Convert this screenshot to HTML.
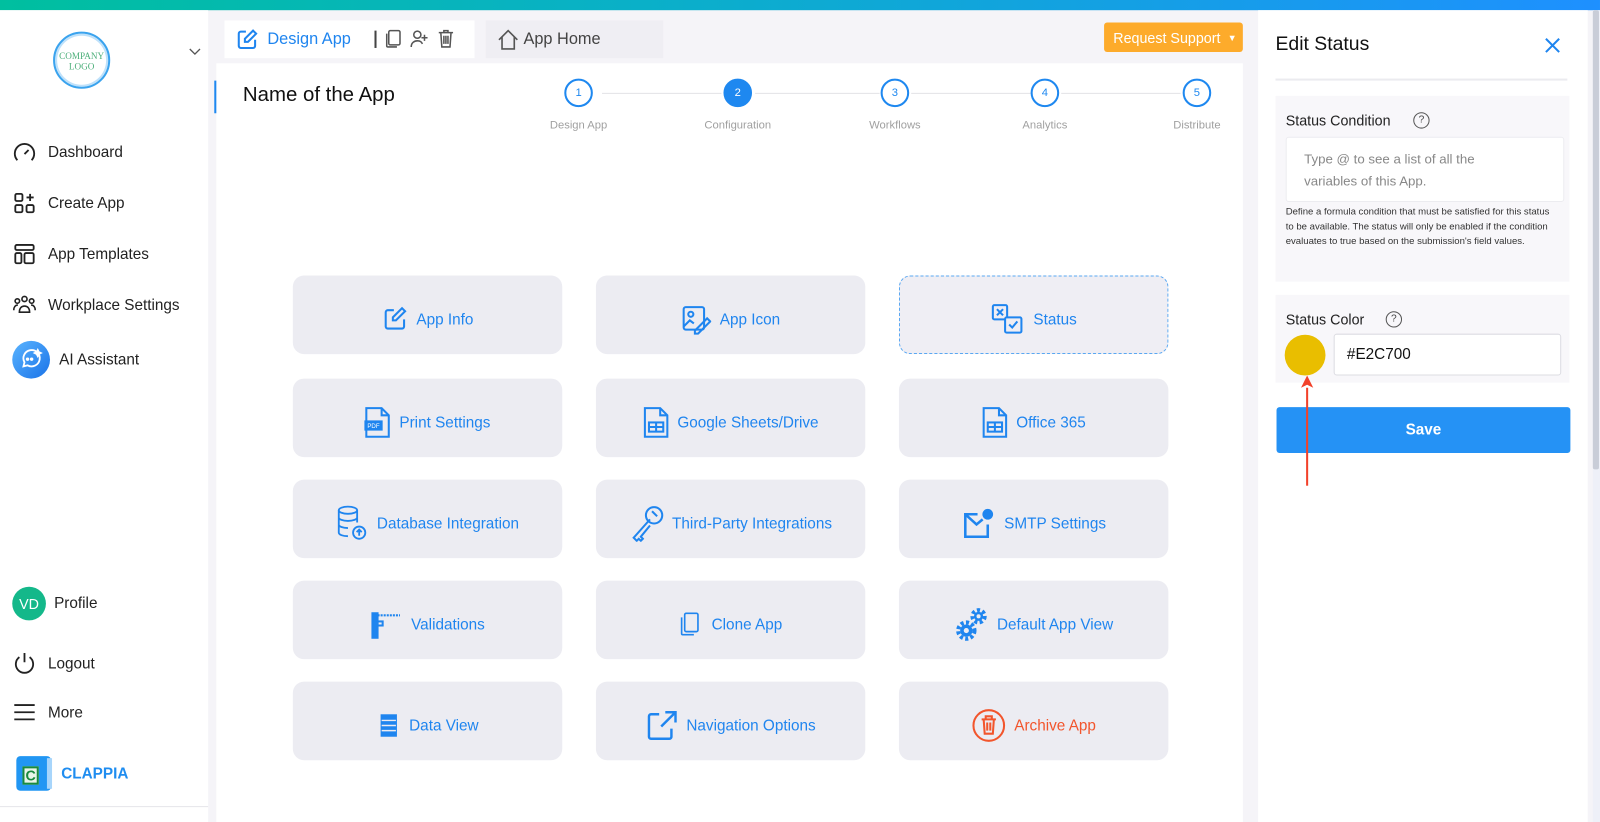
<!DOCTYPE html>
<html><head><meta charset="utf-8"><style>
*{box-sizing:border-box;margin:0;padding:0}
html,body{width:1600px;height:822px;overflow:hidden;background:#f5f4f8;font-family:"Liberation Sans",sans-serif}
#w{position:absolute;left:0;top:0;width:1568px;height:806px;transform:scale(1.0204);transform-origin:0 0}
.a{position:absolute}
.top{left:0;top:0;width:1568px;height:10px;background:linear-gradient(90deg,#00bf9f,#0ab0c8 40%,#1e90ff)}
.side{left:0;top:10px;width:204px;height:796px;background:#fff}
.nav{position:absolute;left:12px;display:flex;align-items:center;font-size:15px;color:#222}
.nav svg{margin-right:11px}
.card{position:absolute;width:264px;height:77px;background:#ececf2;border-radius:11px;display:flex;align-items:center;justify-content:center;color:#1f85ef;font-size:15px;padding-top:9px}
.card svg{margin-right:8px}
.step{position:absolute;width:28px;height:28px;border:2px solid #1e88f0;border-radius:50%;color:#1e88f0;font-size:11px;display:flex;align-items:center;justify-content:center;background:#fff}
.sl{position:absolute;font-size:11px;color:#a0a0a0;width:120px;text-align:center}
.ln{position:absolute;height:1px;background:#e2e2e6;top:91px}
</style></head><body><div id="w">
<div class="a top"></div>
<div class="a side">
 <div class="a" style="left:52px;top:21px;width:56px;height:56px;border-radius:50%;border:2px solid #3aa3ee;box-shadow:inset 0 0 0 2px #bfe1fa;font-family:'Liberation Serif',serif;font-size:9px;color:#4caf7a;text-align:center;line-height:10px;padding-top:17px">COMPANY<br>LOGO</div>
 <svg class="a" style="left:185px;top:37px" width="12" height="8" viewBox="0 0 12 8" fill="none" stroke="#555" stroke-width="1.3"><path d="M1 1l5 5 5-5"/></svg>
 <div class="nav" style="top:128px"><svg width="24" height="22" viewBox="0 0 24 22" fill="none" stroke="#222" stroke-width="1.8"><path d="M5 19A9.5 9.5 0 1 1 19 19"/><path d="M12 13l4-4"/></svg>Dashboard</div>
 <div class="nav" style="top:178px"><svg width="24" height="22" viewBox="0 0 24 22" fill="none" stroke="#222" stroke-width="1.8"><rect x="3" y="2" width="7" height="7" rx="1.5"/><rect x="3" y="13" width="7" height="7" rx="1.5"/><rect x="14" y="13" width="7" height="7" rx="1.5"/><path d="M17.5 2v7M14 5.5h7"/></svg>Create App</div>
 <div class="nav" style="top:228px"><svg width="24" height="22" viewBox="0 0 24 22" fill="none" stroke="#222" stroke-width="1.8"><rect x="3" y="2" width="18" height="5" rx="1.5"/><rect x="3" y="10" width="6" height="10" rx="1.5"/><rect x="12" y="10" width="9" height="10" rx="1.5"/></svg>App Templates</div>
 <div class="nav" style="top:278px"><svg width="24" height="22" viewBox="0 0 24 22" fill="none" stroke="#222" stroke-width="1.6"><circle cx="12" cy="5" r="2.5"/><circle cx="5" cy="7" r="2.2"/><circle cx="19" cy="7" r="2.2"/><path d="M7 18c0-4 2-6 5-6s5 2 5 6zM1.5 16c0-3 1.5-5 4-5M22.5 16c0-3-1.5-5-4-5"/></svg>Workplace Settings</div>
 <div class="nav" style="top:324px"><div style="width:37px;height:37px;border-radius:50%;background:linear-gradient(135deg,#5ab4ff,#1a73e8);margin-right:9px;position:relative"><svg width="37" height="37" viewBox="0 0 37 37" fill="none" stroke="#fff" stroke-width="1.8"><path d="M11 25l1-4a8 8 0 1 1 3 3z"/><circle cx="15" cy="18" r="0.8" fill="#fff"/><circle cx="19" cy="18" r="0.8" fill="#fff"/><path d="M25 9l1 2 2 1-2 1-1 2-1-2-2-1 2-1z" fill="#fff"/></svg></div>AI Assistant</div>
 <div class="nav" style="top:565px"><div style="width:33px;height:33px;border-radius:50%;background:#14b88a;color:#fff;font-size:14px;display:flex;align-items:center;justify-content:center;margin-right:8px">VD</div>Profile</div>
 <div class="nav" style="top:628px"><svg width="24" height="24" viewBox="0 0 24 24" fill="none" stroke="#222" stroke-width="1.8"><path d="M7 6a8.5 8.5 0 1 0 10 0M12 2v9"/></svg>Logout</div>
 <div class="nav" style="top:677px"><svg width="24" height="22" viewBox="0 0 24 22" fill="none" stroke="#222" stroke-width="1.8"><path d="M2 4h20M2 11h20M2 18h20"/></svg>More</div>
 <div class="a" style="left:16px;top:731px;width:34px;height:34px;border-radius:4px;background:#2196f3"><div style="position:absolute;left:6px;top:10px;width:16px;height:18px;background:#e8f5e9;border:2px solid #1a8a3e;color:#1a8a3e;font-weight:bold;font-size:14px;line-height:14px;text-align:center">C</div><div style="position:absolute;right:-1px;top:2px;width:5px;height:30px;background:#a7d5fb"></div></div>
 <div class="a" style="left:60px;top:740px;color:#1f8df0;font-weight:bold;font-size:15px">CLAPPIA</div>
 <div class="a" style="left:0;top:780px;width:204px;height:1px;background:#e6e6ea"></div>
</div>
<div class="a" style="left:220px;top:20px;width:245px;height:37px;background:#fff"></div>
<div class="a" style="left:231px;top:28px;display:flex;align-items:center;color:#1f85ef;font-size:16px"><svg width="22" height="22" viewBox="0 0 22 22" fill="none" stroke="#1f85ef" stroke-width="2"><path d="M10 3H5a2 2 0 0 0-2 2v12a2 2 0 0 0 2 2h12a2 2 0 0 0 2-2v-6"/><path d="M17 2l3 3-8 8H9v-3z"/></svg><span style="margin-left:9px">Design App</span></div>
<div class="a" style="left:367px;top:28px;display:flex;align-items:center;gap:6px;color:#555"><div style="width:2px;height:17px;background:#444"></div><svg width="20" height="20" viewBox="0 0 20 20" fill="none" stroke="#555" stroke-width="1.5"><rect x="6" y="2" width="11" height="14" rx="1.5"/><path d="M4 5v12a1 1 0 0 0 1 1h9"/></svg><svg width="20" height="20" viewBox="0 0 20 20" fill="none" stroke="#555" stroke-width="1.5"><circle cx="8" cy="6" r="3.5"/><path d="M2 18c0-4 3-6 6-6s4 1 5 3M15 6v6M12 9h6"/></svg><svg width="20" height="20" viewBox="0 0 20 20" fill="none" stroke="#555" stroke-width="1.5"><path d="M3 4h14M8 4V2h4v2M5 4l1 14h8l1-14M8 7v8M10 7v8M12 7v8"/></svg></div>
<div class="a" style="left:476px;top:20px;width:174px;height:37px;background:#efeef3;display:flex;align-items:center;padding-left:11px;color:#444;font-size:16px"><svg width="22" height="22" viewBox="0 0 22 22" fill="none" stroke="#555" stroke-width="1.6"><path d="M2 11L11 2l9 9M5 8v12h12V8"/></svg><span style="margin-left:4px">App Home</span></div>
<div class="a" style="left:1082px;top:22px;width:136px;height:29px;background:#fdab2b;border-radius:3px;color:#fff;font-size:14px;display:flex;align-items:center;padding-left:9px">Request Support <span style="font-size:9px;margin-left:7px">&#9660;</span></div>
<div class="a" style="left:212px;top:62px;width:1006px;height:744px;background:#fff"></div>
<div class="a" style="left:210px;top:79px;width:2px;height:32px;background:#1e88f0"></div>
<div class="a" style="left:238px;top:82px;font-size:20px;color:#111">Name of the App</div>
<div class="ln" style="left:590px;width:117px"></div><div class="ln" style="left:740px;width:122px"></div><div class="ln" style="left:893px;width:117px"></div><div class="ln" style="left:1040px;width:117px"></div>
<div class="step" style="left:553px;top:77px">1</div>
<div class="step" style="left:709px;top:77px;background:#1e88f0;color:#fff">2</div>
<div class="step" style="left:863px;top:77px">3</div>
<div class="step" style="left:1010px;top:77px">4</div>
<div class="step" style="left:1159px;top:77px">5</div>
<div class="sl" style="left:507px;top:117px">Design App</div>
<div class="sl" style="left:663px;top:117px">Configuration</div>
<div class="sl" style="left:817px;top:117px">Workflows</div>
<div class="sl" style="left:964px;top:117px">Analytics</div>
<div class="sl" style="left:1113px;top:117px">Distribute</div>
<div class="card" style="left:287px;top:270px"><svg width="26" height="26" viewBox="0 0 26 26" fill="none" stroke="#1f85ef" stroke-width="2"><path d="M12 4H6a2 2 0 0 0-2 2v14a2 2 0 0 0 2 2h14a2 2 0 0 0 2-2v-7"/><path d="M20 2l3 3-9 9h-3v-3z"/></svg>App Info</div>
<div class="card" style="left:584px;top:270px"><svg width="30" height="30" viewBox="0 0 30 30" fill="none" stroke="#1f85ef" stroke-width="2"><rect x="3" y="3" width="20" height="22" rx="2"/><circle cx="10" cy="10" r="2.5"/><path d="M3 22l6-6 4 3M14 26l12-12 3 3-12 12h-3z"/></svg>App Icon</div>
<div class="card" style="left:881px;top:270px;border:1.5px dashed #5aa8f2;background:#efeef4"><svg width="34" height="32" viewBox="0 0 34 32" fill="none" stroke="#1f85ef" stroke-width="2"><rect x="2" y="2" width="14" height="14" rx="1.5"/><path d="M6 6l6 6M12 6l-6 6"/><rect x="14" y="14" width="16" height="15" rx="1.5" fill="#efeef4"/><path d="M18 21l3 3 5-6"/></svg>Status</div>
<div class="card" style="left:287px;top:371px"><svg width="26" height="32" viewBox="0 0 26 32" fill="none" stroke="#1f85ef" stroke-width="2"><path d="M2 2h15l7 7v21H2z"/><path d="M17 2v7h7"/><rect x="1" y="15" width="16" height="8" fill="#1f85ef"/><text x="3" y="21.5" font-size="6" fill="#fff" stroke="none" font-family="Liberation Sans">PDF</text></svg>Print Settings</div>
<div class="card" style="left:584px;top:371px"><svg width="26" height="32" viewBox="0 0 26 32" fill="none" stroke="#1f85ef" stroke-width="2"><path d="M2 2h15l7 7v21H2z"/><path d="M17 2v7h7"/><rect x="6" y="16" width="14" height="9"/><path d="M6 20.5h14M13 16v9"/></svg>Google Sheets/Drive</div>
<div class="card" style="left:881px;top:371px"><svg width="26" height="32" viewBox="0 0 26 32" fill="none" stroke="#1f85ef" stroke-width="2"><path d="M2 2h15l7 7v21H2z"/><path d="M17 2v7h7"/><rect x="6" y="16" width="14" height="9"/><path d="M6 20.5h14M13 16v9"/></svg>Office 365</div>
<div class="card" style="left:287px;top:470px"><svg width="32" height="36" viewBox="0 0 32 36" fill="none" stroke="#1f85ef" stroke-width="1.8"><ellipse cx="12" cy="5" rx="9" ry="3.5"/><path d="M3 5v22c0 2 4 3.5 9 3.5M21 5v12M3 12c0 2 4 3.5 9 3.5s9-1.5 9-3.5M3 19c0 2 4 3.5 9 3.5"/><circle cx="23" cy="27" r="6"/><path d="M23 30v-6M20.5 26.5l2.5-2.5 2.5 2.5"/></svg>Database Integration</div>
<div class="card" style="left:584px;top:470px"><svg width="34" height="36" viewBox="0 0 34 36" fill="none" stroke="#1f85ef" stroke-width="2"><circle cx="24" cy="10" r="8"/><path d="M20 14l-16 18 3 3 2-2 2 2 2-2-2-2 9-11M22 6l5 5"/></svg>Third-Party Integrations</div>
<div class="card" style="left:881px;top:470px"><svg width="34" height="34" viewBox="0 0 34 34" fill="none" stroke="#1f85ef" stroke-width="2.5"><path d="M16 8H4v22h22V18"/><path d="M4 8l11 10 6-5"/><circle cx="26" cy="8" r="4" fill="#1f85ef"/></svg>SMTP Settings</div>
<div class="card" style="left:287px;top:569px"><svg width="32" height="30" viewBox="0 0 32 30" fill="none" stroke="#1f85ef" stroke-width="2"><rect x="2" y="4" width="5" height="24" fill="#1f85ef"/><path d="M7 6h22" stroke-dasharray="2 1"/><rect x="7" y="12" width="5" height="4"/></svg>Validations</div>
<div class="card" style="left:584px;top:569px"><svg width="24" height="26" viewBox="0 0 24 26" fill="none" stroke="#1f85ef" stroke-width="1.6"><rect x="6" y="2" width="13" height="18" rx="1.5"/><path d="M3 6v16a1 1 0 0 0 1 1h11"/></svg>Clone App</div>
<div class="card" style="left:881px;top:569px"><svg width="34" height="36" viewBox="0 0 34 36"><g stroke="#1f85ef" stroke-width="4" stroke-dasharray="3 2.3" fill="none"><circle cx="12" cy="24" r="8"/><circle cx="24" cy="10" r="6"/></g><circle cx="12" cy="24" r="6" fill="#1f85ef"/><circle cx="24" cy="10" r="4.5" fill="#1f85ef"/><circle cx="12" cy="24" r="2.5" fill="#ececf2"/><circle cx="24" cy="10" r="2" fill="#ececf2"/></svg>Default App View</div>
<div class="card" style="left:287px;top:668px"><svg width="24" height="26" viewBox="0 0 24 26" fill="none" stroke="#1f85ef" stroke-width="2"><rect x="5" y="3" width="14" height="20" fill="#1f85ef"/><path d="M5 8h14M5 13h14M5 18h14" stroke="#ececf2" stroke-width="1.4"/></svg>Data View</div>
<div class="card" style="left:584px;top:668px"><svg width="32" height="32" viewBox="0 0 32 32" fill="none" stroke="#1f85ef" stroke-width="2.4"><path d="M13 5H5a2 2 0 0 0-2 2v20a2 2 0 0 0 2 2h18a2 2 0 0 0 2-2v-8"/><path d="M19 3h10v10M29 3L15 17"/></svg>Navigation Options</div>
<div class="card" style="left:881px;top:668px;color:#f2552c"><svg width="34" height="34" viewBox="0 0 34 34" fill="none" stroke="#f2552c" stroke-width="2"><circle cx="17" cy="17" r="15"/><path d="M10 11h14M14 11V8h6v3M12 11l1 14h8l1-14M15.5 14v8M18.5 14v8"/></svg>Archive App</div>
<div class="a" style="left:1233px;top:10px;width:323px;height:796px;background:#fff"></div>
<div class="a" style="left:1250px;top:33px;font-size:19px;color:#111">Edit Status</div>
<svg class="a" style="left:1513px;top:36px" width="17" height="17" viewBox="0 0 17 17" stroke="#1f85ef" stroke-width="2"><path d="M2 2l13 13M15 2L2 15"/></svg>
<div class="a" style="left:1250px;top:77px;width:286px;height:2px;background:#ebebef"></div>
<div class="a" style="left:1250px;top:94px;width:288px;height:182px;background:#f8f7fa"></div>
<div class="a" style="left:1260px;top:110px;font-size:14px;color:#222">Status Condition</div>
<div class="a" style="left:1385px;top:110px;width:16px;height:16px;border:1.5px solid #555;border-radius:50%;font-size:10px;text-align:center;line-height:13px;color:#444">?</div>
<div class="a" style="left:1260px;top:134px;width:273px;height:64px;background:#fff;border:1px solid #ececf0;border-radius:3px;padding:10px 0 0 17px;font-size:13px;color:#888;line-height:22px">Type @ to see a list of all the<br>variables of this App.</div>
<div class="a" style="left:1260px;top:200px;width:262px;font-size:9.4px;color:#333;line-height:14.7px">Define a formula condition that must be satisfied for this status to be available. The status will only be enabled if the condition evaluates to true based on the submission's field values.</div>
<div class="a" style="left:1250px;top:289px;width:288px;height:86px;background:#f8f7fa"></div>
<div class="a" style="left:1260px;top:305px;font-size:14px;color:#222">Status Color</div>
<div class="a" style="left:1358px;top:305px;width:16px;height:16px;border:1.5px solid #555;border-radius:50%;font-size:10px;text-align:center;line-height:13px;color:#444">?</div>
<div class="a" style="left:1259px;top:328px;width:40px;height:40px;border-radius:50%;background:#e9be00"></div>
<div class="a" style="left:1307px;top:327px;width:223px;height:41px;background:#fff;border:1px solid #dcdce2;border-radius:3px;padding-left:12px;line-height:39px;font-size:15px;color:#111">#E2C700</div>
<div class="a" style="left:1251px;top:399px;width:288px;height:45px;background:#2592f5;border-radius:3px;color:#fff;font-weight:bold;font-size:15px;text-align:center;line-height:45px">Save</div>
<div class="a" style="left:1280px;top:380px;width:2px;height:96px;background:#f2412a"></div>
<svg class="a" style="left:1274px;top:368px" width="14" height="14" viewBox="0 0 14 14"><path d="M7 0L13 12L7 9L1 12Z" fill="#f2412a"/></svg>
<div class="a" style="left:1561px;top:10px;width:7px;height:796px;background:#eef0f8"></div>
<div class="a" style="left:1561px;top:10px;width:6px;height:450px;background:#c9cdd8;border-radius:2px"></div>
</div></body></html>
